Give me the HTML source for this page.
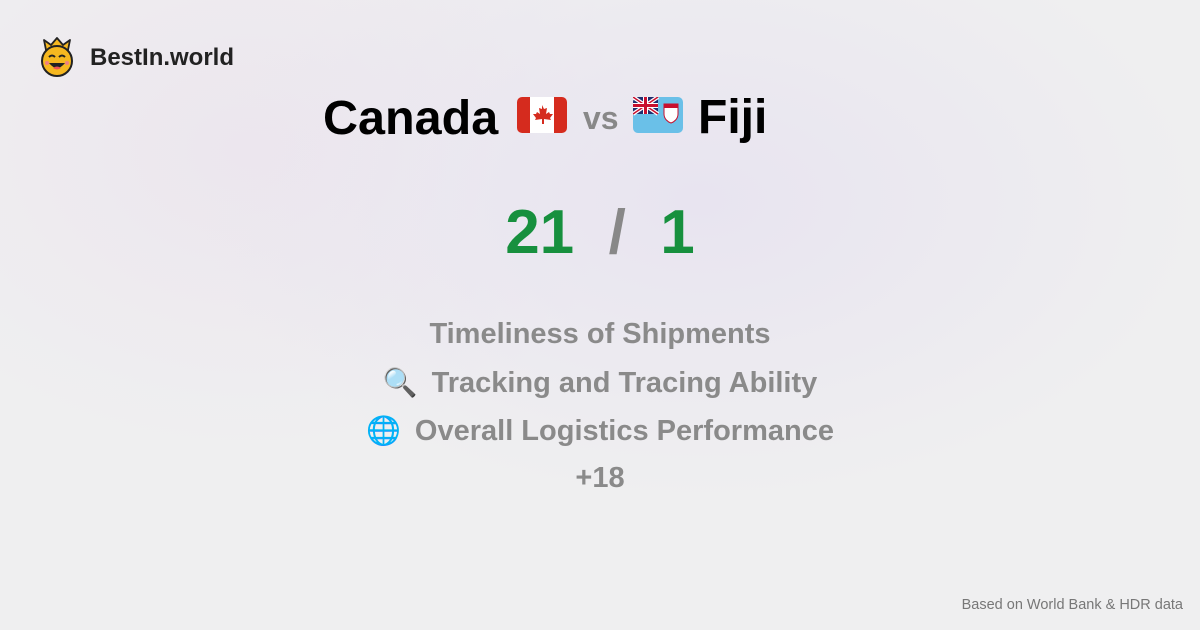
<!DOCTYPE html>
<html><head><meta charset="utf-8"><style>
*{margin:0;padding:0;box-sizing:border-box}
body{width:1200px;height:630px;overflow:hidden;font-family:"Liberation Sans",sans-serif;font-weight:bold;
background:radial-gradient(ellipse 500px 300px at 700px 200px,#e8e4f0,transparent),radial-gradient(ellipse 400px 300px at 250px 150px,#ece6ee,transparent),#efeff0;position:relative}
.a{position:absolute;white-space:nowrap}
.c{left:0;width:1200px;text-align:center}
.li{color:#8a8a8a;font-size:29px}
.e{font-size:28px;margin-right:14px}
</style></head><body>
<svg class="a" style="left:38px;top:36px" width="38" height="42" viewBox="0 0 38 42">
<path d="M8 14 L6 4 L13 9 L19 2 L25 9 L32 4 L30 14Z" fill="#f6b820" stroke="#222" stroke-width="1.8" stroke-linejoin="round"/>
<circle cx="19" cy="25" r="15" fill="#f6b820" stroke="#222" stroke-width="2"/>
<path d="M11 21 q3-3 6 0 M21 21 q3-3 6 0" stroke="#222" stroke-width="2" fill="none"/>
<path d="M11 27 q8 10 16 0Z" fill="#222"/><path d="M15 32 q4 3 8 0 q-4-3-8 0" fill="#e55"/>
<circle cx="9" cy="27" r="2" fill="#f08080"/><circle cx="29" cy="27" r="2" fill="#f08080"/>
</svg>
<div class="a" style="left:90px;top:44px;font-size:24px;color:#222">BestIn.world</div>
<div class="a" style="left:323px;top:90px;font-size:48.5px;color:#000">Canada</div>
<svg class="a" style="left:517px;top:97px" width="50" height="36" viewBox="0 0 50 36"><rect width="50" height="36" rx="5" fill="#fff"/><path d="M5 0h8v36H5a5 5 0 0 1-5-5V5a5 5 0 0 1 5-5zM37 0h8a5 5 0 0 1 5 5v26a5 5 0 0 1-5 5h-8z" fill="#d52b1e"/><path d="M25 8l2 4 3-1-1 6 3-2 1 2 3 0-3 4 1 2-7-1v5h-2v-5l-7 1 1-2-3-4 3 0 1-2 3 2-1-6 3 1z" fill="#d52b1e"/></svg>
<div class="a" style="left:583px;top:100px;font-size:32px;color:#888">vs</div>
<svg class="a" style="left:633px;top:97px" width="50" height="36" viewBox="0 0 50 36"><rect width="50" height="36" rx="5" fill="#6ac0e8"/><path d="M5 0h20v17H0V5a5 5 0 0 1 5-5z" fill="#1f2e6e"/><path d="M0 0L25 17M25 0L0 17" stroke="#fff" stroke-width="4"/><path d="M0 0L25 17M25 0L0 17" stroke="#c8102e" stroke-width="1.5"/><path d="M12.5 0v17M0 8.5h25" stroke="#fff" stroke-width="5"/><path d="M12.5 0v17M0 8.5h25" stroke="#c8102e" stroke-width="3"/><path d="M31 7h14v10c0 5-4 8-7 9-3-1-7-4-7-9z" fill="#fff" stroke="#c8102e" stroke-width="1"/><rect x="31" y="7" width="14" height="4" fill="#c8102e"/></svg>
<div class="a" style="left:698px;top:90px;font-size:48px;color:#000">Fiji</div>
<div class="a c" style="top:197px;font-size:62px;color:#17903e">21 <span style="color:#888">&nbsp;/&nbsp;</span> 1</div>
<div class="a c li" style="top:318px">Timeliness of Shipments</div>
<div class="a c li" style="top:366px"><span class="e">🔍</span>Tracking and Tracing Ability</div>
<div class="a c li" style="top:414px"><span class="e">🌐</span>Overall Logistics Performance</div>
<div class="a c li" style="top:462px">+18</div>
<div class="a" style="right:17px;top:597px;font-size:14.5px;color:#777;font-weight:normal">Based on World Bank &amp; HDR data</div>
</body></html>
